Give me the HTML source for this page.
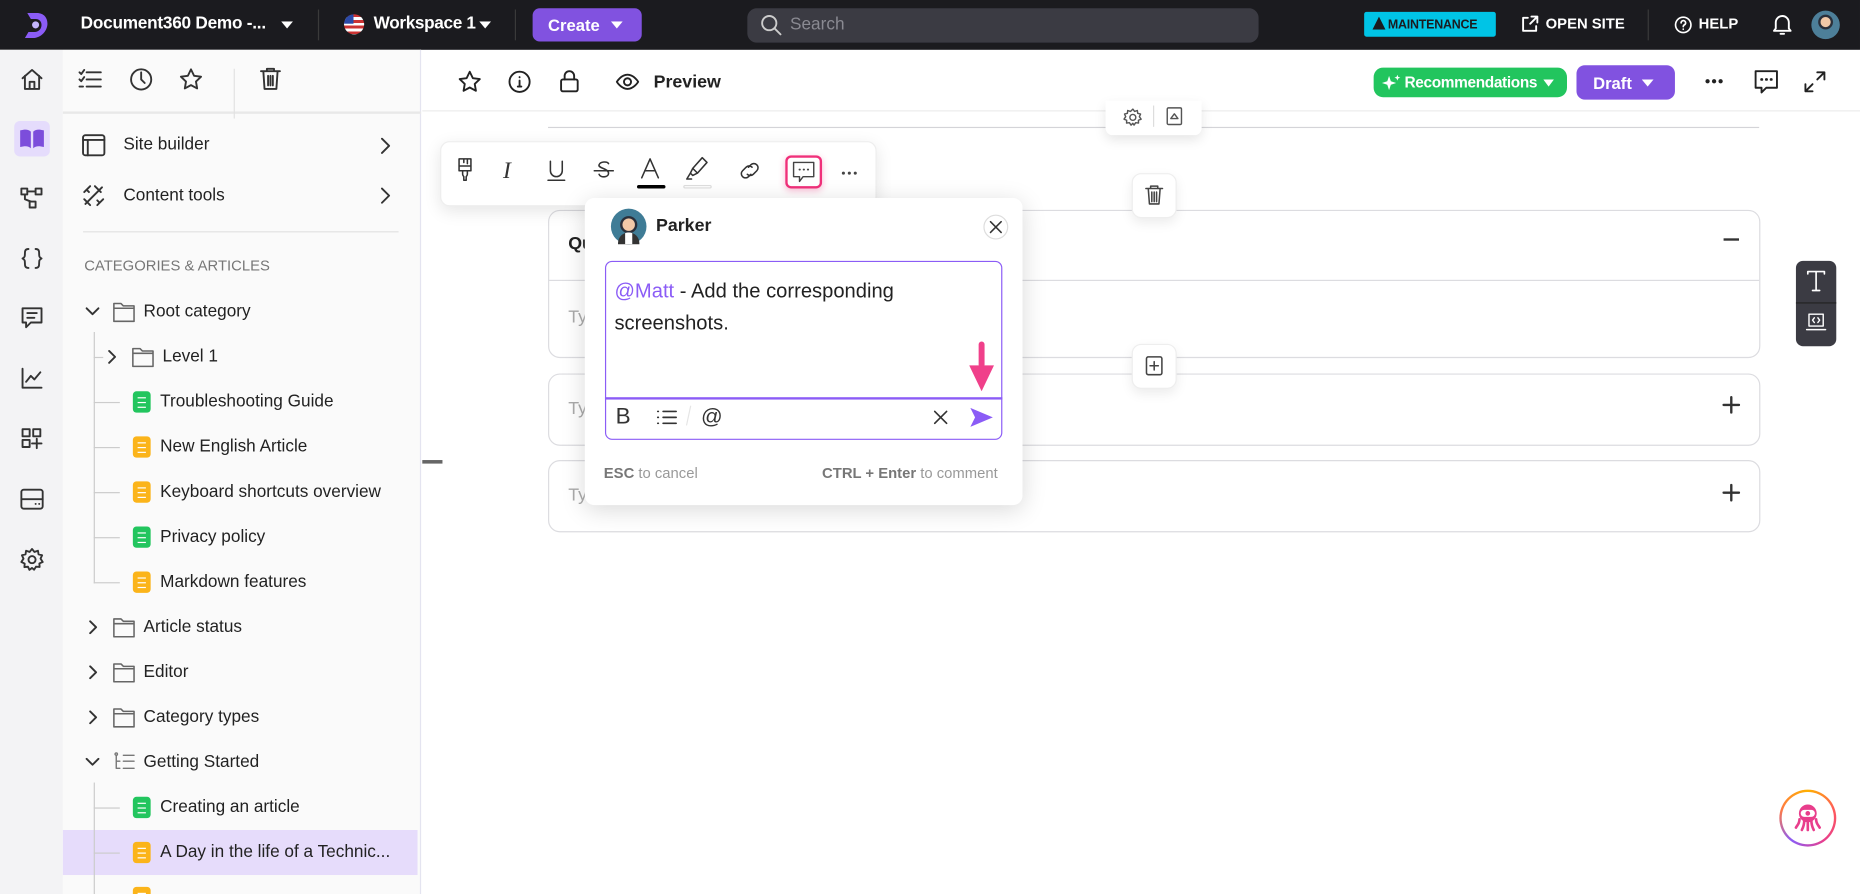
<!DOCTYPE html>
<html><head><meta charset="utf-8"><style>
*{box-sizing:border-box;margin:0;padding:0}
html,body{width:1860px;height:894px;overflow:hidden;background:#fff;font-family:"Liberation Sans",Arial,sans-serif}
#w{position:absolute;left:0;top:0;width:1568px;height:754px;overflow:hidden;transform:scale(1.18622,1.18568);transform-origin:0 0;background:#fff}
.a{position:absolute}
svg.i{position:absolute;fill:none;stroke:#333;stroke-width:1.6;stroke-linecap:round;stroke-linejoin:round}
.t{position:absolute;font-size:14.5px;color:#222;white-space:nowrap}
.doc{position:absolute;width:15px;height:18px;border-radius:3px}
.doc::after{content:"";position:absolute;left:4px;top:5px;width:7px;height:7px;border-top:1.5px solid #fff;border-bottom:1.5px solid #fff}
.doc::before{content:"";position:absolute;left:4px;top:8.5px;width:7px;border-top:1.5px solid #fff}
.g{background:#22c55e}.o{background:#fbb41a}
.hl{position:absolute;height:1px;background:#bbb}
</style></head><body><div id="w">
<!-- topbar -->
<div class="a" style="left:0;top:0;width:1568px;height:42px;background:#1b1b1f"></div>
<svg class="a" style="left:18px;top:9px" width="24" height="25" viewBox="0 0 24 25"><path d="M5 2h8c6 0 9 4 9 9s-4 11-11 12H3l3-5h5c4 0 6-3 6-6s-2-5-5-5H8z" fill="#8b5cf6"/><circle cx="12" cy="12" r="3" fill="#c4b5fd"/></svg>
<div class="t" style="left:68px;top:12px;color:#fff;font-size:14.5px;font-weight:bold;letter-spacing:-0.2px">Document360 Demo -...</div>
<svg class="a" style="left:237px;top:18px" width="10" height="6"><path d="M0 0h10L5 6z" fill="#fff"/></svg>
<div class="a" style="left:268px;top:8px;width:1px;height:26px;background:#3a3a3a"></div>
<div class="a" style="left:290px;top:12px;width:17px;height:17px;border-radius:50%;overflow:hidden;background:repeating-linear-gradient(#c33 0 2.4px,#fff 2.4px 4.8px)"><div style="width:8px;height:8px;background:#2b4aa8"></div></div>
<div class="t" style="left:315px;top:12px;color:#fff;font-size:14.5px;font-weight:bold;letter-spacing:-0.3px">Workspace 1</div>
<svg class="a" style="left:404px;top:18px" width="10" height="6"><path d="M0 0h10L5 6z" fill="#fff"/></svg>
<div class="a" style="left:434px;top:8px;width:1px;height:26px;background:#3a3a3a"></div>
<div class="a" style="left:449px;top:7px;width:92px;height:28px;border-radius:6px;background:#8152e0"></div>
<div class="t" style="left:462px;top:13px;color:#fff;font-size:14px;font-weight:bold">Create</div>
<svg class="a" style="left:515px;top:18px" width="10" height="6"><path d="M0 0h10L5 6z" fill="#fff"/></svg>
<div class="a" style="left:630px;top:7px;width:431px;height:29px;border-radius:8px;background:#3b3b43"></div>
<svg class="i" style="left:641px;top:12px;stroke:#ccc" width="18" height="18"><circle cx="7.5" cy="7.5" r="6"/><path d="M12 12l5 5"/></svg>
<div class="t" style="left:666px;top:13px;color:#8a8a92;font-size:14.5px">Search</div>
<div class="a" style="left:1150px;top:10px;width:111px;height:21px;border-radius:2px;background:#00c4e6"></div>
<svg class="a" style="left:1157px;top:14px" width="11" height="11"><path d="M5.5 0L11 11H0z" fill="#1b1b1f"/></svg>
<div class="t" style="left:1170px;top:15px;font-size:10.5px;font-weight:bold;color:#1b1b1f;letter-spacing:-0.2px">MAINTENANCE</div>
<svg class="i" style="left:1282px;top:13px;stroke:#fff" width="15" height="15"><path d="M6 2H2v11h11V9M8 7l6-6M9 1h5v5"/></svg>
<div class="t" style="left:1303px;top:13px;color:#fff;font-size:12.5px;font-weight:bold">OPEN SITE</div>
<div class="a" style="left:1389px;top:8px;width:1px;height:26px;background:#3a3a3a"></div>
<svg class="i" style="left:1411px;top:13px;stroke:#fff;stroke-width:1.4" width="16" height="16"><circle cx="8" cy="8" r="6.5"/><path d="M6.2 6.3a1.9 1.9 0 113 1.5c-.9.5-1.2.9-1.2 1.7M8 11.5v.2"/></svg>
<div class="t" style="left:1432px;top:13px;color:#fff;font-size:12.5px;font-weight:bold">HELP</div>
<svg class="i" style="left:1494px;top:11px;stroke:#fff" width="17" height="19"><path d="M3 13V8a5.5 5.5 0 0111 0v5l1.5 2h-14zM7 17.5h3"/></svg>
<div class="a" style="left:1527px;top:9px;width:24px;height:24px;border-radius:50%;background:radial-gradient(circle at 50% 40%,#f2c9a8 0 4px,#2a2f3a 4.5px 6px,#4d7f99 6.5px)"></div>
<!-- rail -->
<div class="a" style="left:0;top:42px;width:53px;height:712px;background:#f3f3f5"></div>
<div class="a" style="left:12px;top:102px;width:30px;height:30px;border-radius:5px;background:#e5dcfc"></div>
<svg class="i" style="left:17px;top:57px" width="20" height="20"><path d="M2 9l8-7 8 7M4 7v11h12V7M8 18v-6h4v6"/></svg>
<svg class="a" style="left:16px;top:108px" width="22" height="18"><path d="M1 2c4-1 7-1 9 1v14c-2-2-5-2-9-1zM21 2c-4-1-7-1-9 1v14c2-2 5-2 9-1z" fill="#7c4ddb"/></svg>
<svg class="i" style="left:17px;top:157px" width="20" height="20"><rect x="1" y="2" width="5" height="5"/><rect x="13" y="2" width="5" height="5"/><rect x="8" y="13" width="5" height="5"/><path d="M6 4.5h7M4 7v4l5 2"/></svg>
<svg class="i" style="left:17px;top:208px" width="20" height="20"><path d="M7 2c-3 0-3 2-3 4s0 3-2 4c2 1 2 2 2 4s0 4 3 4M13 2c3 0 3 2 3 4s0 3 2 4c-2 1-2 2-2 4s0 4-3 4"/></svg>
<svg class="i" style="left:17px;top:258px" width="20" height="20"><path d="M2 2h16v12h-9l-4 4v-4H2zM6 6h8M6 10h6"/></svg>
<svg class="i" style="left:17px;top:309px" width="20" height="20"><path d="M2 2v16h16M5 13l4-5 3 3 5-6"/></svg>
<svg class="i" style="left:17px;top:360px" width="20" height="20"><rect x="2" y="2" width="6" height="6"/><rect x="11" y="2" width="6" height="6"/><rect x="2" y="11" width="6" height="6"/><path d="M14 10v8M10 14h8"/></svg>
<svg class="i" style="left:17px;top:411px" width="20" height="20"><rect x="1" y="2" width="18" height="16" rx="2"/><path d="M1 10h18M13 14h.1M16 14h.1"/></svg>
<svg class="i" style="left:17px;top:462px" width="20" height="20"><circle cx="10" cy="10" r="3"/><path d="M10 1l2 2.5 3-1 .5 3 3 .8-1.3 2.8L19 12l-2.8 1.2.2 3-3-.3-1.7 2.6L10 17l-2.2 1.6L6.6 16l-3 .3.2-3L1 12l1.8-2.8L1.5 6.3l3-.8.5-3 3 1z"/></svg>
<!-- sidebar -->
<div class="a" style="left:53px;top:42px;width:302px;height:712px;background:#fafafa;border-right:1.5px solid #e4e4f0"></div>
<div class="hl" style="left:53px;top:94px;width:302px;background:#e8e8e8;height:1.5px"></div>
<div class="a" style="left:197px;top:58px;width:1px;height:42px;background:#e2e2e2"></div>
<svg class="i" style="left:66px;top:58px" width="20" height="18"><path d="M7 3h12M7 9h12M7 15h12M1 3l1.5 1.5L5 1M1 9l1.5 1.5L5 7M1 15h3"/></svg>
<svg class="i" style="left:109px;top:57px" width="20" height="20"><circle cx="10" cy="10" r="8.5"/><path d="M10 4v6l3 3"/></svg>
<svg class="i" style="left:151px;top:57px" width="20" height="20"><path d="M10 1.5l2.6 5.4 5.9.8-4.3 4.1 1 5.8L10 14.8l-5.2 2.8 1-5.8L1.5 7.7l5.9-.8z"/></svg>
<svg class="i" style="left:219px;top:56px" width="18" height="21"><path d="M1 4h16M6 4V2h6v2M3 4l1 15h10l1-15M7 8v8M9 8v8M11 8v8"/></svg>
<svg class="i" style="left:69px;top:113px" width="20" height="19"><rect x="1" y="1" width="18" height="17" rx="2"/><path d="M1 5h18M5 5v13"/></svg>
<div class="t" style="left:104px;top:114px">Site builder</div>
<svg class="i" style="left:320px;top:115px" width="10" height="16"><path d="M2 2l6 6-6 6"/></svg>
<svg class="i" style="left:69px;top:155px" width="20" height="20"><path d="M3 17L17 3M2 7l5-5M4 5l2 2M13 18l5-5M15 16l-2-2M2 13l5 5M11 2l5 5"/></svg>
<div class="t" style="left:104px;top:157px">Content tools</div>
<svg class="i" style="left:320px;top:157px" width="10" height="16"><path d="M2 2l6 6-6 6"/></svg>
<div class="hl" style="left:70px;top:195px;width:266px;background:#e2e2e2"></div>
<div class="t" style="left:71px;top:217px;font-size:12.5px;color:#777">CATEGORIES &amp; ARTICLES</div>
<!-- tree -->
<svg class="i" style="left:72px;top:258px" width="12" height="10"><path d="M1 2l5 5 5-5"/></svg>
<svg class="i" style="left:95px;top:254px;stroke:#666;stroke-width:1.3" width="20" height="18"><path d="M1 2h6l2 2h9v13H1zM1 6h17"/></svg>
<div class="t" style="left:121px;top:255px">Root category</div>
<div class="a" style="left:79px;top:280px;width:1px;height:212px;background:#ccc"></div>
<div class="hl" style="left:79px;top:301px;width:8px;background:#ccc"></div>
<svg class="i" style="left:90px;top:295px" width="10" height="12"><path d="M2 1l5 5-5 5"/></svg>
<svg class="i" style="left:111px;top:292px;stroke:#666;stroke-width:1.3" width="20" height="18"><path d="M1 2h6l2 2h9v13H1zM1 6h17"/></svg>
<div class="t" style="left:137px;top:293px">Level 1</div>
<div class="hl" style="left:79px;top:339px;width:22px;background:#ccc"></div><div class="doc g" style="left:112px;top:330px"></div><div class="t" style="left:135px;top:331px">Troubleshooting Guide</div>
<div class="hl" style="left:79px;top:377px;width:22px;background:#ccc"></div><div class="doc o" style="left:112px;top:368px"></div><div class="t" style="left:135px;top:369px">New English Article</div>
<div class="hl" style="left:79px;top:415px;width:22px;background:#ccc"></div><div class="doc o" style="left:112px;top:406px"></div><div class="t" style="left:135px;top:407px">Keyboard shortcuts overview</div>
<div class="hl" style="left:79px;top:453px;width:22px;background:#ccc"></div><div class="doc g" style="left:112px;top:444px"></div><div class="t" style="left:135px;top:445px">Privacy policy</div>
<div class="hl" style="left:79px;top:491px;width:22px;background:#ccc"></div><div class="doc o" style="left:112px;top:482px"></div><div class="t" style="left:135px;top:483px">Markdown features</div>
<svg class="i" style="left:74px;top:523px" width="10" height="12"><path d="M2 1l5 5-5 5"/></svg>
<svg class="i" style="left:95px;top:520px;stroke:#666;stroke-width:1.3" width="20" height="18"><path d="M1 2h6l2 2h9v13H1zM1 6h17"/></svg>
<div class="t" style="left:121px;top:521px">Article status</div>
<svg class="i" style="left:74px;top:561px" width="10" height="12"><path d="M2 1l5 5-5 5"/></svg>
<svg class="i" style="left:95px;top:558px;stroke:#666;stroke-width:1.3" width="20" height="18"><path d="M1 2h6l2 2h9v13H1zM1 6h17"/></svg>
<div class="t" style="left:121px;top:559px">Editor</div>
<svg class="i" style="left:74px;top:599px" width="10" height="12"><path d="M2 1l5 5-5 5"/></svg>
<svg class="i" style="left:95px;top:596px;stroke:#666;stroke-width:1.3" width="20" height="18"><path d="M1 2h6l2 2h9v13H1zM1 6h17"/></svg>
<div class="t" style="left:121px;top:597px">Category types</div>
<svg class="i" style="left:72px;top:638px" width="12" height="10"><path d="M1 2l5 5 5-5"/></svg>
<svg class="i" style="left:95px;top:634px;stroke:#777;stroke-width:1.2" width="20" height="18"><path d="M3 3v11M3 8h3M3 14h3M9 3h9M9 8h9M9 14h9"/><circle cx="3" cy="2" r="1"/></svg>
<div class="t" style="left:121px;top:635px">Getting Started</div>
<div class="a" style="left:53px;top:700px;width:299px;height:38px;background:#e6dcfb"></div>
<div class="a" style="left:79px;top:660px;width:1px;height:94px;background:#ccc"></div>
<div class="hl" style="left:79px;top:681px;width:22px;background:#ccc"></div><div class="doc g" style="left:112px;top:672px"></div><div class="t" style="left:135px;top:673px">Creating an article</div>
<div class="hl" style="left:79px;top:719px;width:22px;background:#ccc"></div><div class="doc o" style="left:112px;top:710px"></div><div class="t" style="left:135px;top:711px">A Day in the life of a Technic...</div>
<div class="doc o" style="left:112px;top:748px"></div>
<!-- main header -->
<div class="hl" style="left:356px;top:93px;width:1212px;background:#ececec"></div>
<svg class="i" style="left:386px;top:59px;stroke:#222" width="20" height="20"><path d="M10 1.5l2.6 5.4 5.9.8-4.3 4.1 1 5.8L10 14.8l-5.2 2.8 1-5.8L1.5 7.7l5.9-.8z"/></svg>
<svg class="i" style="left:428px;top:59px;stroke:#222" width="20" height="20"><circle cx="10" cy="10" r="8.5"/><path d="M10 9v5M10 6v.2M8.5 14h3"/></svg>
<svg class="i" style="left:471px;top:58px;stroke:#222" width="18" height="21"><rect x="2" y="9" width="14" height="10" rx="1.5"/><path d="M5 9V6a4 4 0 018 0v3"/></svg>
<svg class="i" style="left:519px;top:60px;stroke:#222" width="20" height="18"><path d="M1 9s3.5-6 9-6 9 6 9 6-3.5 6-9 6-9-6-9-6z"/><circle cx="10" cy="9" r="3"/></svg>
<div class="t" style="left:551px;top:61px;font-size:15px;font-weight:bold">Preview</div>
<div class="a" style="left:1158px;top:57px;width:163px;height:25px;border-radius:8px;background:#22c55e"></div>
<svg class="a" style="left:1165px;top:62px" width="16" height="16"><path d="M6 2l1.5 4.5L12 8l-4.5 1.5L6 14l-1.5-4.5L0 8l4.5-1.5zM13 1l.7 1.8 1.8.7-1.8.7L13 6l-.7-1.8-1.8-.7 1.8-.7z" fill="#fff"/></svg>
<div class="t" style="left:1184px;top:62px;color:#fff;font-size:13px;font-weight:bold;letter-spacing:-0.3px">Recommendations</div>
<svg class="a" style="left:1301px;top:67px" width="9" height="6"><path d="M0 0h9L4.5 6z" fill="#fff"/></svg>
<div class="a" style="left:1329px;top:55px;width:83px;height:29px;border-radius:7px;background:#8152e0"></div>
<div class="t" style="left:1343px;top:62px;color:#fff;font-size:14px;font-weight:bold">Draft</div>
<svg class="a" style="left:1384px;top:67px" width="10" height="6"><path d="M0 0h10L5 6z" fill="#fff"/></svg>
<svg class="a" style="left:1437px;top:66px" width="16" height="5"><circle cx="2.5" cy="2.5" r="1.8" fill="#222"/><circle cx="8" cy="2.5" r="1.8" fill="#222"/><circle cx="13.5" cy="2.5" r="1.8" fill="#222"/></svg>
<svg class="i" style="left:1479px;top:59px;stroke:#222" width="20" height="21"><path d="M1 1h18v14h-9l-4 4v-4H1z"/><path d="M6 8h.3M10 8h.3M14 8h.3" stroke-width="2.2"/></svg>
<svg class="i" style="left:1520px;top:59px;stroke:#222" width="20" height="20"><path d="M12 2h6v6M18 2l-6 6M8 18H2v-6M2 18l6-6"/></svg>
<!-- content -->
<div class="hl" style="left:462px;top:107px;width:1021px;background:#d4d4d8"></div>
<div class="a" style="left:932px;top:85px;width:81px;height:29px;background:#fff;border-radius:0 0 6px 6px;box-shadow:0 4px 10px rgba(0,0,0,.1)"></div>
<svg class="i" style="left:947px;top:91px;stroke:#555;stroke-width:1.2" width="16" height="16"><circle cx="8" cy="8" r="2.5"/><path d="M8 1l1.5 2 2.3-.8.3 2.4 2.4.6-1 2.2L15 9.5l-2.3.9.1 2.4-2.4-.3L9 14.5 8 13l-1.5 1.5-1.4-2-2.4.3.1-2.4L.5 9.5l1.5-2.1-1-2.2 2.4-.6.3-2.4 2.3.8z"/></svg>
<div class="a" style="left:972px;top:89px;width:1px;height:18px;background:#ddd"></div>
<svg class="i" style="left:983px;top:90px;stroke:#555;stroke-width:1.2" width="14" height="16"><rect x="1" y="1" width="12" height="14" rx="1"/><path d="M4 10l3-4 3 4z"/></svg>
<div class="a" style="left:462px;top:177px;width:1022px;height:125px;border:1px solid #dcdce0;border-radius:10px"></div>
<div class="hl" style="left:462px;top:236px;width:1021px;background:#dcdce0"></div>
<div class="t" style="left:479px;top:197px;font-weight:bold;font-size:15px">Qu</div>
<div class="a" style="left:1453px;top:201px;width:13px;height:2px;background:#333"></div>
<div class="t" style="left:479px;top:259px;color:#aaa;font-size:15px">Ty</div>
<div class="a" style="left:462px;top:315px;width:1022px;height:61px;border:1px solid #dcdce0;border-radius:10px"></div>
<div class="t" style="left:479px;top:336px;color:#aaa;font-size:15px">Ty</div>
<svg class="i" style="left:1452px;top:334px;stroke:#333;stroke-width:2" width="15" height="15"><path d="M7.5 1v13M1 7.5h13"/></svg>
<div class="a" style="left:462px;top:388px;width:1022px;height:61px;border:1px solid #dcdce0;border-radius:10px"></div>
<div class="t" style="left:479px;top:409px;color:#aaa;font-size:15px">Ty</div>
<svg class="i" style="left:1452px;top:408px;stroke:#333;stroke-width:2" width="15" height="15"><path d="M7.5 1v13M1 7.5h13"/></svg>
<div class="a" style="left:356px;top:388px;width:17px;height:3px;background:#666"></div>
<div class="a" style="left:954px;top:146px;width:38px;height:38px;background:#fff;border:1px solid #eee;border-radius:8px;box-shadow:0 4px 10px rgba(0,0,0,.08)"></div>
<svg class="i" style="left:965px;top:155px;stroke:#444;stroke-width:1.3" width="16" height="19"><path d="M1 4h14M5 4V2h6v2M3 4l1 13h8l1-13M6 7v8M8 7v8M10 7v8"/></svg>
<div class="a" style="left:954px;top:290px;width:38px;height:38px;background:#fff;border:1px solid #eee;border-radius:8px;box-shadow:0 4px 10px rgba(0,0,0,.08)"></div>
<svg class="i" style="left:965px;top:300px;stroke:#444;stroke-width:1.3" width="16" height="18"><rect x="1.5" y="1" width="13" height="15" rx="1.5"/><path d="M8 5v7M4.5 8.5h7"/></svg>
<!-- format toolbar -->
<div class="a" style="left:371px;top:119px;width:368px;height:55px;background:#fff;border:1px solid #eee;border-radius:8px;box-shadow:0 4px 14px rgba(0,0,0,.1)"></div>
<svg class="i" style="left:384px;top:133px;stroke:#333;stroke-width:1.3" width="16" height="20"><path d="M3 1h10v10H3zM3 7h10M6 11v3c0 1 .5 1.5 1 2v3h2v-3c.5-.5 1-1 1-2v-3M7 1v3M10 1v4"/></svg>
<div class="t" style="left:424px;top:133px;font-family:'Liberation Serif',serif;font-style:italic;font-size:20px;color:#333">I</div>
<svg class="i" style="left:461px;top:135px;stroke:#333;stroke-width:1.3" width="16" height="18"><path d="M3 1v8a5 5 0 0010 0V1M1 17h14"/></svg>
<svg class="i" style="left:500px;top:135px;stroke:#333;stroke-width:1.3" width="18" height="18"><path d="M13 3c-1-2-7-2-8 1s8 3 8 7-7 4-8 1M1 9h16"/></svg>
<svg class="i" style="left:539px;top:133px;stroke:#333;stroke-width:1.3" width="18" height="18"><path d="M2 17L9 1l7 16M4.5 11h9"/></svg>
<div class="a" style="left:537px;top:156px;width:24px;height:3px;border-radius:2px;background:#000"></div>
<svg class="i" style="left:578px;top:132px;stroke:#333;stroke-width:1.3" width="20" height="20"><path d="M14 1l4 4-8 9-4-4zM6 10l-2 4 2 2 4-2M4 14l-3 5h4"/></svg>
<div class="a" style="left:576px;top:156px;width:24px;height:3px;border-radius:2px;border:1px solid #ddd"></div>
<svg class="i" style="left:622px;top:136px;stroke:#333;stroke-width:1.3" width="20" height="16"><path d="M9 5l2-2a3.5 3.5 0 015 5l-3 3a3.5 3.5 0 01-5 0M11 11l-2 2a3.5 3.5 0 01-5-5l3-3a3.5 3.5 0 015 0"/></svg>
<div class="a" style="left:662px;top:131px;width:31px;height:28px;border:2.5px solid #f0307a;border-radius:5px;box-shadow:0 2px 6px rgba(240,48,122,.3)"></div>
<svg class="i" style="left:668px;top:136px;stroke:#444;stroke-width:1.2" width="19" height="19"><path d="M1 1h17v12h-9l-3 4v-4H1z"/><path d="M6 7h.3M9.5 7h.3M13 7h.3" stroke-width="1.6"/></svg>
<svg class="a" style="left:709px;top:144px" width="14" height="4"><circle cx="2" cy="2" r="1.3" fill="#444"/><circle cx="7" cy="2" r="1.3" fill="#444"/><circle cx="12" cy="2" r="1.3" fill="#444"/></svg>
<!-- comment popup -->
<div class="a" style="left:493px;top:167px;width:369px;height:259px;background:#fff;border-radius:8px;box-shadow:0 4px 20px rgba(0,0,0,.15)"></div>
<div class="a" style="left:515px;top:176px;width:30px;height:30px;border-radius:50%;background:radial-gradient(circle at 50% 45%,#f2c9a8 0 5px,#2a2f3a 5.5px 7px,#3f7c96 7.5px)"></div>
<div class="a" style="left:521px;top:196px;width:18px;height:10px;border-radius:9px 9px 0 0;background:#333;overflow:hidden"><div style="margin:0 auto;width:6px;height:10px;background:#fff"></div></div>
<div class="t" style="left:553px;top:182px;font-weight:bold;font-size:15px;color:#222">Parker</div>
<div class="a" style="left:829px;top:181px;width:21px;height:21px;border-radius:50%;border:1px solid #ddd"></div>
<svg class="i" style="left:834px;top:186px;stroke:#333;stroke-width:1.3" width="11" height="11"><path d="M1 1l9 9M10 1l-9 9"/></svg>
<div class="a" style="left:510px;top:220px;width:335px;height:151px;border:1.5px solid #8b5cf6;border-radius:6px"></div>
<div class="a" style="left:510px;top:335px;width:335px;height:1.5px;background:#8b5cf6"></div>
<div class="t" style="left:518px;top:232px;font-size:17px;color:#222;line-height:27px;white-space:normal;width:320px"><span style="color:#8b5cf6">@Matt</span> - Add the corresponding screenshots.</div>
<div class="t" style="left:519px;top:341px;font-size:19px;color:#333">B</div>
<svg class="i" style="left:553px;top:345px;stroke:#333;stroke-width:1.4" width="18" height="14"><path d="M6 2h11M6 7h11M6 12h11M1.5 2h.5M1.5 7h.5M1.5 12h.5" /></svg>
<div class="a" style="left:580px;top:342px;width:1px;height:17px;background:#e5e5e5;transform:rotate(12deg)"></div>
<div class="t" style="left:591px;top:341px;font-size:18px;color:#333">@</div>
<svg class="i" style="left:787px;top:346px;stroke:#333;stroke-width:1.4" width="12" height="12"><path d="M1 1l10 10M11 1L1 11"/></svg>
<svg class="a" style="left:818px;top:344px" width="19" height="16"><path d="M0 0l19 8-19 8 4-8z" fill="#8b5cf6"/></svg>
<div class="a" style="left:825px;top:288px;width:5px;height:22px;border-radius:3px;background:#f0408a"></div>
<svg class="a" style="left:817px;top:308px" width="21" height="22"><path d="M0 0h21L10.5 22z" fill="#f0408a"/></svg>
<div class="t" style="left:509px;top:392px;font-size:12.5px;color:#999"><b style="color:#777">ESC</b> to cancel</div>
<div class="t" style="left:693px;top:392px;font-size:12.5px;color:#999"><b style="color:#777">CTRL + Enter</b> to comment</div>
<!-- right panel -->
<div class="a" style="left:1514px;top:220px;width:34px;height:72px;border-radius:6px;background:#3b3b43"></div>
<div class="a" style="left:1514px;top:255px;width:34px;height:1px;background:#222"></div>
<svg class="i" style="left:1522px;top:228px;stroke:#fff;stroke-width:1.4" width="18" height="18"><path d="M2 3V1h14v2M9 1v16M6 17h6"/></svg>
<svg class="i" style="left:1522px;top:263px;stroke:#fff;stroke-width:1.2" width="18" height="18"><rect x="3" y="2" width="12" height="10"/><path d="M1 15h16M7.5 5l-1.5 2 1.5 2M10.5 5l1.5 2-1.5 2"/></svg>
<!-- bot -->
<div class="a" style="left:1500px;top:666px;width:48px;height:48px;border-radius:50%;background:conic-gradient(#ffb000,#ff5a5a,#e83e8c,#8b5cf6,#ff7a45,#ffb000);padding:2px"><div style="width:100%;height:100%;border-radius:50%;background:#fff"></div></div>
<svg class="a" style="left:1512px;top:677px" width="24" height="26"><circle cx="12" cy="9" r="7.5" fill="#e83e8c"/><rect x="6" y="6" width="12" height="6" rx="3" fill="#fff"/><circle cx="12" cy="9" r="2" fill="#e83e8c"/><path d="M5 14c0 4-2 5-3 7M9 15c0 4-1 6-2 8M12 15v8M15 15c0 4 1 6 2 8M19 14c0 4 2 5 3 7" stroke="#e83e8c" stroke-width="2.2" fill="none" stroke-linecap="round"/></svg>
</div></body></html>
